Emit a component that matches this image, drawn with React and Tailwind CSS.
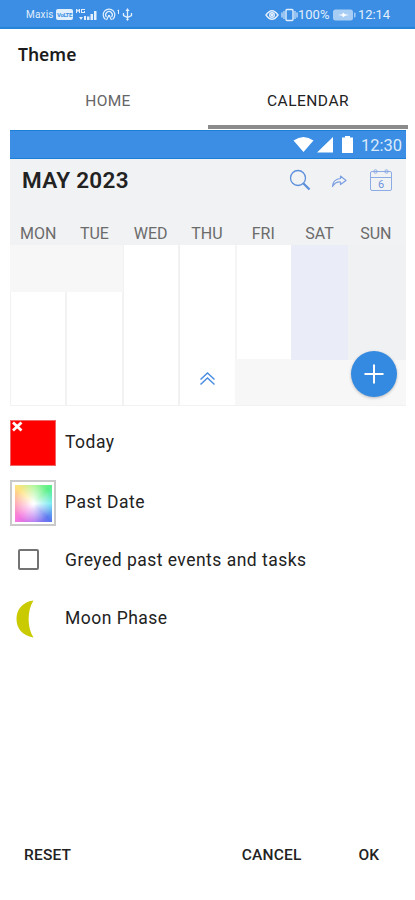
const DAYS = ["MON", "TUE", "WED", "THU", "FRI", "SAT", "SUN"];

function StatusBar() {
    return (
        <div className="h-[29px] shrink-0 bg-[#3b8ee3] border-b-2 border-[#2583d9] flex items-center justify-between pl-[26px] pr-[24px] pt-[2px] text-[#e2effd]">
            <div className="flex items-center">
                <span className="w-[30px] text-[10px] tracking-[0.2px]">Maxis</span>
                <span className="w-[17px] h-[11px] rounded-[2px] bg-[#e2effd] text-[#3b8ee3] text-[6px] font-bold leading-[11px] text-center tracking-[-0.4px]">VoLTE</span>
                <svg className="ml-[3px]" width="21" height="14" viewBox="0 0 21 14" fill="currentColor">
                    <path d="M0 1h1l1 1.5L3 1h1v4H3V3L2 4 1 3v2H0zM5 1h4v1H6v2h2V3h1v2H5zM3 9h4L5 12zM8 8h2v2H8z" />
                    <path d="M8 10h2v2H8zM11 8.500h2.500V12H11zM14.500 6H17v6h-2.500zM18 3h2.500v9H18z" />
                </svg>
                <svg className="ml-[5px]" width="19" height="14" viewBox="0 0 19 14" fill="none" stroke="currentColor" strokeWidth="1.200">
                    <path d="M3.500 11.500a5.800 5.800 0 1 1 7 0M4.500 9a3.300 3.300 0 1 1 5 0M7 7l-2.500 5M7 7l2.500 5" />
                    <path d="M15.500 2.500l1-.5v4" strokeWidth="1" />
                </svg>
                <svg className="ml-[1px]" width="11" height="14" viewBox="0 0 11 14" fill="none" stroke="currentColor" strokeWidth="1.300">
                    <path d="M5.500 2v10M1.500 5v2.500l4 2 4-2V5" />
                    <path d="M5.500 0l2 3h-4zM4 11h3l-1.500 2z" fill="currentColor" stroke="none" />
                </svg>
            </div>
            <div className="flex items-center">
                <svg width="14" height="12" viewBox="0 0 14 12" fill="none" stroke="currentColor" strokeWidth="1.400">
                    <path d="M1 6q6-8.500 12 0q-6 8.500-12 0z" />
                    <circle cx="7" cy="6" r="2.300" />
                    <circle cx="7" cy="6" r=".6" fill="currentColor" />
                </svg>
                <svg className="ml-[2px]" width="17" height="14" viewBox="0 0 17 14" fill="none" stroke="currentColor" strokeWidth="1.400">
                    <rect x="5" y="1.500" width="7" height="11" rx="1" />
                    <path d="M3 3v8M1 4.500v5M14 3v8M16 4.500v5" strokeWidth="1.100" />
                </svg>
                <span className="w-[34px] text-[13px]">100%</span>
                <svg width="24" height="12" viewBox="0 0 24 12">
                    <rect x="1" y=".5" width="20" height="11" rx="2.500" fill="#a8cdf5" />
                    <rect x="22" y="3.500" width="1.500" height="5" rx=".7" fill="#a8cdf5" />
                    <path d="M6 6l4.500-.8L11 3.500l2 1.700 4 .8-4 .8-2 1.700-.5-1.700z" fill="#fff" />
                </svg>
                <span className="ml-[2px] w-[33px] text-[13px] tracking-[-0.1px]">12:14</span>
            </div>
        </div>
    );
}

function PreviewHeader() {
    return (
        <div className="h-[86px] bg-[#f1f2f4] flex flex-col justify-between">
            <div className="flex items-center h-[44px] pl-[12px] pr-[13px]">
                <span className="flex-1 text-[22.5px] font-semibold tracking-[0.3px] text-[#222]">MAY 2023</span>
                <svg className="mr-[20px] mb-[3px]" width="22" height="22" viewBox="0 0 22 22" fill="none" stroke="#5c8fdc">
                    <circle cx="9" cy="9" r="7.500" strokeWidth="1.300" />
                    <path d="M14.500 14.500l6 6" strokeWidth="2.300" />
                </svg>
                <svg className="mr-[21px] mb-[1px]" width="17" height="14" viewBox="0 0 17 14" fill="none" stroke="#7ba0e2" strokeWidth="1.200">
                    <path d="M1.500 12.500Q2 5 9.500 4.500V2l5.500 4.500-5.500 4V8Q4.500 7.500 1.500 12.500z" strokeLinejoin="round" />
                </svg>
                <svg className="mb-[3px]" width="24" height="24" viewBox="0 0 24 24" fill="none" stroke="#8cabe4">
                    <rect x="1.500" y="3.500" width="21" height="19" rx="1.500" />
                    <path d="M1.500 9.500h21M8 3.500h8" />
                    <circle cx="6.500" cy="3.500" r="1.700" />
                    <circle cx="17.500" cy="3.500" r="1.700" />
                    <text x="12" y="19.500" textAnchor="middle" fontSize="11" fill="#6d94dd" stroke="none">6</text>
                </svg>
            </div>
            <div className="grid grid-cols-7 pr-[2px] pb-[1px]">
                {DAYS.map(day => (
                    <span key={day} className="text-center text-[16px] leading-[20px] text-[#6b6b6b]">{day}</span>
                ))}
            </div>
        </div>
    );
}

function CalendarPreview() {
    return (
        <div className="relative ml-[10px] mr-[9px] mt-px h-[276px]">
            <div className="h-[29px] bg-[#3b8ee3] border-y border-[#1b7fd8] flex items-center justify-end pr-[4px] text-white">
                <svg width="21" height="17" viewBox="0 0 21 17" fill="currentColor">
                    <path d="M.5 4.500Q10.500-2.500 20.500 4.500L10.500 16z" />
                </svg>
                <svg className="ml-[3px]" width="16" height="17" viewBox="0 0 16 17" fill="currentColor">
                    <path d="M16 1v15.500H0z" />
                </svg>
                <svg className="ml-[9px]" width="11" height="17" viewBox="0 0 11 17" fill="currentColor">
                    <path d="M3 0h5v1.500h3V17H0V1.500h3z" />
                </svg>
                <span className="ml-[8px] pt-[3px] text-[16.5px] text-[#dbeafb]">12:30</span>
            </div>
            <PreviewHeader />
            <div className="grid grid-cols-[repeat(6,56.3px)_1fr] h-[161px] bg-[#f7f7f7] border-b border-[#f2f2f2]">
                <div className="mt-[47px] bg-white border-x border-[#f2f2f2]" />
                <div className="mt-[47px] bg-white border-x border-[#f2f2f2]" />
                <div className="bg-white border-x border-[#f2f2f2]" />
                <div className="bg-white border-l border-[#f0f0f0] flex justify-center items-end pb-[19px]">
                    <svg width="17" height="15" viewBox="0 0 17 15" fill="none" stroke="#4b8de0" strokeWidth="1.500">
                        <path d="M1.500 8.500l7-6.500 7 6.500M1.500 13.500l7-6.500 7 6.500" />
                    </svg>
                </div>
                <div className="h-[114px] bg-white border-l-2 border-[#f5f5f5]" />
                <div className="h-[115px] bg-[#eaecf8]" />
                <div className="h-[115px] bg-[#eff1f3]" />
            </div>
            <button className="absolute right-[9px] bottom-[9px] size-[46px] rounded-full bg-[#348ae1] shadow-[0_1px_3px_rgba(0,0,0,0.25)] flex items-center justify-center">
                <svg width="20" height="20" viewBox="0 0 20 20" stroke="#fff" strokeWidth="2">
                    <path d="M10 .5v19M.5 10h19" />
                </svg>
            </button>
        </div>
    );
}

function OptionRow({ label, children }) {
    return (
        <div className="flex items-center h-[46px]">
            <div className="w-[55px] flex items-center">{children}</div>
            <span className="text-[17.5px] tracking-[0.48px] text-[#222] whitespace-nowrap pb-[1px]">{label}</span>
        </div>
    );
}

export default function App() {
    return (
        <div className="w-[415px] h-[900px] bg-white flex flex-col overflow-hidden font-['Roboto',sans-serif]">
            <StatusBar />
            <h1 className="h-[50px] pl-[18px] text-[17.5px] font-semibold font-['Noto_Sans',sans-serif] leading-[50px] text-[#1b1b1b]">Theme</h1>

            <div className="h-[50px] flex pl-[8px] pr-[7px]">
                <div className="flex-1 text-center text-[15.5px] leading-[44px] tracking-[0.3px] text-[#666]">HOME</div>
                <div className="flex-1 text-center text-[15.5px] leading-[44px] tracking-[0.5px] text-[#222] border-b-4 border-[#8b8b8b]">CALENDAR</div>
            </div>

            <CalendarPreview />

            <div className="pl-[10px] pt-[14px]">
                <OptionRow label="Today">
                    <div className="size-[46px] bg-[#f00] border border-[#e66]">
                        <svg width="13" height="13" viewBox="0 0 13 13" stroke="#fff" strokeWidth="2.800">
                            <path d="M2 1.500l8.500 8M10.500 1.500L2 9.500" />
                        </svg>
                    </div>
                </OptionRow>
                <div className="h-[14px]" />
                <OptionRow label="Past Date">
                    <div className="size-[46px] border-2 border-[#c9c9c9] bg-white p-[2.5px]">
                        <div className="size-full bg-[radial-gradient(circle,#fff_3%,rgba(255,255,255,0.65)_28%,rgba(255,255,255,0.1)_75%),conic-gradient(from_0deg,#a8f58a,#48ee7a_45deg,#60e8f0_90deg,#4668ed_135deg,#b069ef_180deg,#f468dc_225deg,#ff9ca8_270deg,#ffe071_315deg,#a8f58a)]" />
                    </div>
                </OptionRow>
                <div className="h-[12px]" />
                <OptionRow label="Greyed past events and tasks">
                    <div className="ml-[8px] mb-[4px] size-[21px] rounded-[2px] border-2 border-[#737373]" />
                </OptionRow>
                <div className="h-[12px]" />
                <OptionRow label="Moon Phase">
                    <svg className="ml-[6px]" width="18" height="38" viewBox="0 0 18 38" fill="#c9ca00">
                        <path d="M17.500.5C6 2 .5 10 .5 19S6 35.500 17.500 37.500C11 28 11 10 17.500.5z" />
                    </svg>
                </OptionRow>
            </div>

            <div className="mt-auto mb-[32px] h-[24px] flex items-center pl-[24px] pr-[36px] text-[15.5px] font-medium text-[#222]">
                <button className="mr-auto tracking-[0.2px]">RESET</button>
                <button className="mr-[57px] tracking-[0.2px]">CANCEL</button>
                <button>OK</button>
            </div>
        </div>
    );
}
